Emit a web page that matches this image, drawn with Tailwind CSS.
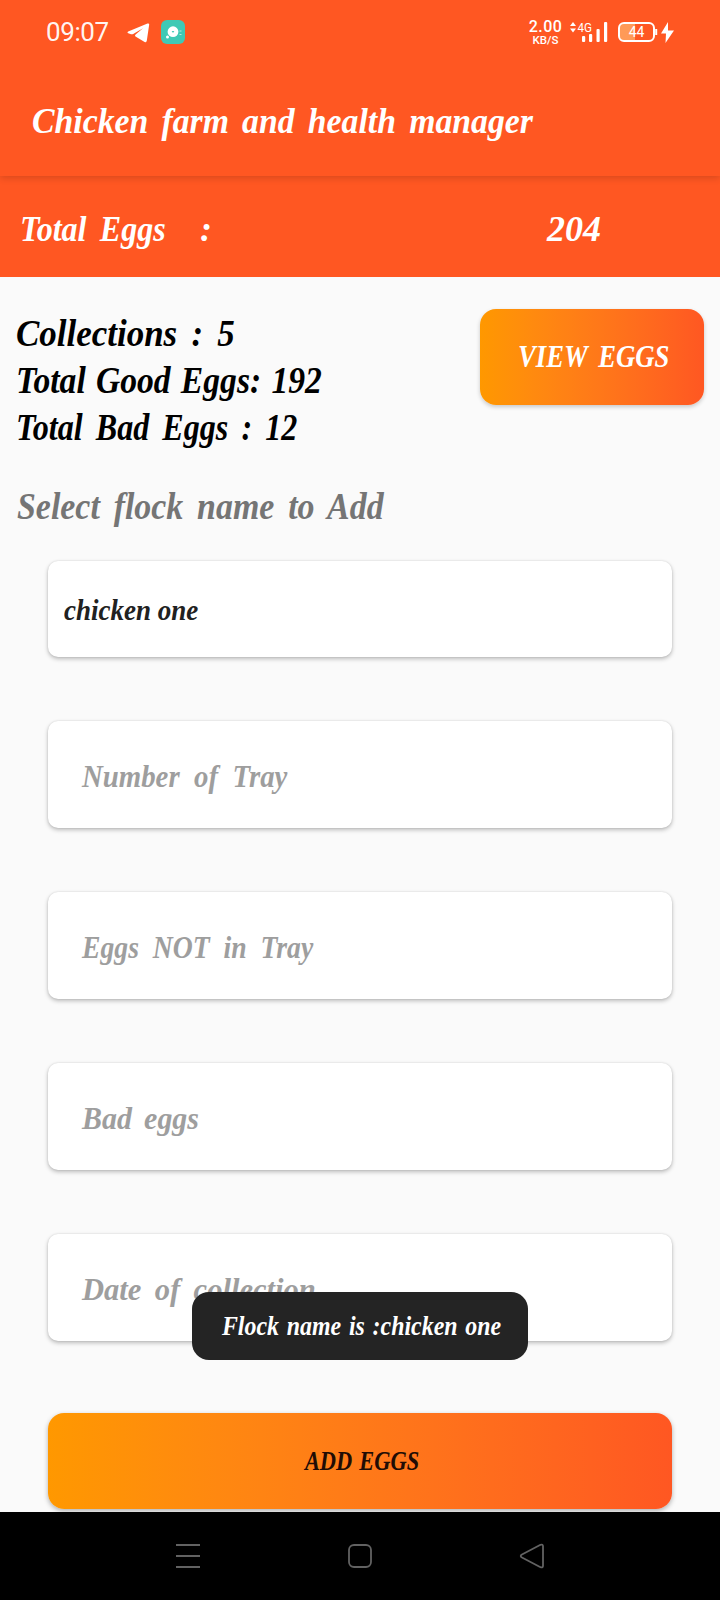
<!DOCTYPE html>
<html lang="en">
<head>
<meta charset="utf-8">
<title>Chicken farm and health manager</title>
<script src="https://cdn.jsdelivr.net/npm/@tailwindcss/browser@4"></script>
</head>
<body class="relative w-[720px] h-[1600px] overflow-hidden flex flex-col bg-[#fafafa] font-['Liberation_Serif',serif] font-bold italic whitespace-nowrap">

  <header class="relative z-10 h-44 shrink-0 bg-[#ff5722] text-white shadow-[0_2px_7px_rgba(0,0,0,0.16)]">
    <div class="h-16 pl-[46px] pr-[46px] flex items-center justify-between font-[Roboto,sans-serif] not-italic font-normal">
      <div class="flex items-center">
        <span class="w-[81px] text-[26px] leading-none tracking-[-0.4px] text-white/95">09:07</span>
        <svg class="w-[23px] h-5 mt-px" viewBox="0 0 23 20" fill="#fff"><path d="M1.200 8.500 20.500.500Q22.300 0 22.200 1.600L19.800 17.800q-.4 2-2.200 1.100L8.500 13.500Q7.500 12.600 8.600 11.600L16 5.200 6.200 11Q5.200 11.500 4 11.200L1.300 10.300Q-.2 9.500 1.200 8.500Z"/></svg>
        <svg class="ml-[11px] size-6" viewBox="0 0 24 24"><rect width="24" height="24" rx="6" fill="#3fc9b5"/><circle cx="12" cy="11.700" r="5.400" fill="#fff"/><circle cx="6.500" cy="17" r="1.500" fill="#fff"/><path d="M10.700 11h2.600l-1.300 2Z" fill="#3fc9b5"/><path d="M18.500 11h2M18.500 14.500h2" stroke="#b5eae2" stroke-width="1.200"/></svg>
      </div>
      <div class="flex items-center">
        <div class="w-[33px] flex flex-col items-center font-medium">
          <span class="text-[16px] leading-4 tracking-[0.4px]">2.00</span>
          <span class="text-[11.5px] leading-[11px]">KB/S</span>
        </div>
        <svg class="ml-[7px] w-[39px] h-[26px]" viewBox="0 -2 39 26" fill="#fff"><path d="M1 5 4 1l3 4ZM1 7.500h6L4 11.500Z"/><text x="8.500" y="11" font-size="13.500" font-family="Roboto" textLength="14.500" lengthAdjust="spacingAndGlyphs">4G</text><rect x="13" y="15" width="3.200" height="6" rx="1"/><rect x="20" y="13" width="3.200" height="8" rx="1"/><rect x="27.500" y="8" width="3.200" height="13" rx="1"/><rect x="35" y="1" width="3.200" height="20" rx="1"/></svg>
        <svg class="ml-[10px] w-[56px] h-[22px]" viewBox="0 0 56 22"><path d="M6 2h11v18H6q-4 0-4-4V6q0-4 4-4Z" fill="#ff9a57"/><rect x="1" y="2" width="35" height="18" rx="5" fill="none" stroke="#fff" stroke-width="2"/><path d="M38.200 8v6" fill="none" stroke="#fff" stroke-width="2"/><text x="18.500" y="16" text-anchor="middle" fill="#fff" font-size="14" font-family="Roboto">44</text><path d="M50 1 43 12.500h5L47.500 22 56 9.500h-6Z" fill="#fff"/></svg>
      </div>
    </div>
    <div class="h-28 pt-[2px] pl-8 flex items-center">
      <h1 class="text-[36px] leading-none origin-left scale-x-[0.938] [word-spacing:5px]">Chicken farm and health manager</h1>
    </div>
  </header>

  <section class="h-[101px] shrink-0 pt-[4px] pl-5 pr-[119px] flex items-center justify-between bg-[#ff5722] text-white text-[36px] leading-none">
    <div class="flex items-center"><span class="w-[180px] origin-left scale-x-[0.89] [word-spacing:6px]">Total Eggs</span><span>:</span></div>
    <span>204</span>
  </section>

  <section class="h-[173px] shrink-0 pt-[33px] pl-4 pr-4 flex items-start justify-between">
    <div class="flex flex-col text-[38px] leading-[47px] text-black">
      <p class="origin-left scale-x-[0.92] [word-spacing:6px]">Collections : 5</p>
      <p class="origin-left scale-x-[0.885] [word-spacing:2px]">Total Good Eggs: 192</p>
      <p class="origin-left scale-x-[0.845] [word-spacing:6px]">Total Bad Eggs : 12</p>
    </div>
    <button class="-mt-px w-56 h-24 flex items-center justify-center rounded-2xl bg-linear-to-r from-[#ff9800] to-[#ff5722] text-white text-[31px] font-bold italic shadow-[0_2px_4px_rgba(0,0,0,0.2)]"><span class="pl-1 pt-px scale-x-[0.86] [word-spacing:5px]">VIEW EGGS</span></button>
  </section>

  <h2 class="h-[111px] shrink-0 pl-[17px] pt-[33px] text-[38px] leading-[47px] text-[#757575]"><span class="inline-block origin-left scale-x-[0.892] [word-spacing:6px]">Select flock name to Add</span></h2>

  <main class="px-12 flex flex-col gap-16 text-[32px] leading-none text-[#9e9e9e]">
    <div class="h-24 pl-[16px] pt-[2px] flex items-center rounded-[10px] bg-white text-[30px] text-[#212121] shadow-[0_2px_4px_rgba(0,0,0,0.25),0_0_2px_rgba(0,0,0,0.12)]"><span class="origin-left scale-x-[0.9]">chicken one</span></div>
    <div class="h-[107px] pl-[34px] pt-[3px] flex items-center rounded-[10px] bg-white shadow-[0_2px_4px_rgba(0,0,0,0.25),0_0_2px_rgba(0,0,0,0.12)]"><span class="origin-left scale-x-[0.9] [word-spacing:8px]">Number of Tray</span></div>
    <div class="h-[107px] pl-[34px] pt-[3px] flex items-center rounded-[10px] bg-white shadow-[0_2px_4px_rgba(0,0,0,0.25),0_0_2px_rgba(0,0,0,0.12)]"><span class="origin-left scale-x-[0.865] [word-spacing:8px]">Eggs NOT in Tray</span></div>
    <div class="h-[107px] pl-[34px] pt-[3px] flex items-center rounded-[10px] bg-white shadow-[0_2px_4px_rgba(0,0,0,0.25),0_0_2px_rgba(0,0,0,0.12)]"><span class="origin-left scale-x-[0.936] [word-spacing:5px]">Bad eggs</span></div>
    <div class="h-[107px] pl-[34px] pt-[3px] flex items-center rounded-[10px] bg-white shadow-[0_2px_4px_rgba(0,0,0,0.25),0_0_2px_rgba(0,0,0,0.12)]"><span class="origin-left scale-x-[0.955] [word-spacing:6px]">Date of collection</span></div>
    <button class="mt-2 h-24 flex items-center justify-center rounded-2xl bg-linear-to-r from-[#ff9800] to-[#ff5722] text-[#210c05] text-[28px] font-bold italic shadow-[0_2px_5px_rgba(0,0,0,0.3)]"><span class="pl-1 scale-x-[0.8] [word-spacing:2px]">ADD EGGS</span></button>
  </main>

  <nav class="relative mt-[3px] h-[88px] shrink-0 pt-[31px] px-[175px] flex items-start justify-between bg-black">
    <svg class="size-[26px]" viewBox="0 0 26 26" stroke="#626262" stroke-width="2"><path d="M1 2h24M1 13h24M1 24h24"/></svg>
    <svg class="size-[26px]" viewBox="0 0 26 26" fill="none" stroke="#626262" stroke-width="1.800"><rect x="2" y="2" width="22" height="22" rx="5"/></svg>
    <svg class="size-[26px]" viewBox="0 0 26 26" fill="none" stroke="#626262" stroke-width="1.800" stroke-linejoin="round"><path d="M2.500 11.800 21.500 1.800q2.500-.8 2.500 1.500v19.400q0 2.300-2.500 1.500L2.500 14.200q-1.500-1.200 0-2.400Z"/></svg>
  </nav>

  <div class="absolute left-[192px] top-[1292px] w-[336px] h-[68px] flex items-center justify-center rounded-[17px] bg-[#242424] text-white text-[27px] leading-none"><span class="pl-1 pt-px scale-x-[0.885] [word-spacing:2px]">Flock name is :chicken one</span></div>
</body>
</html>
